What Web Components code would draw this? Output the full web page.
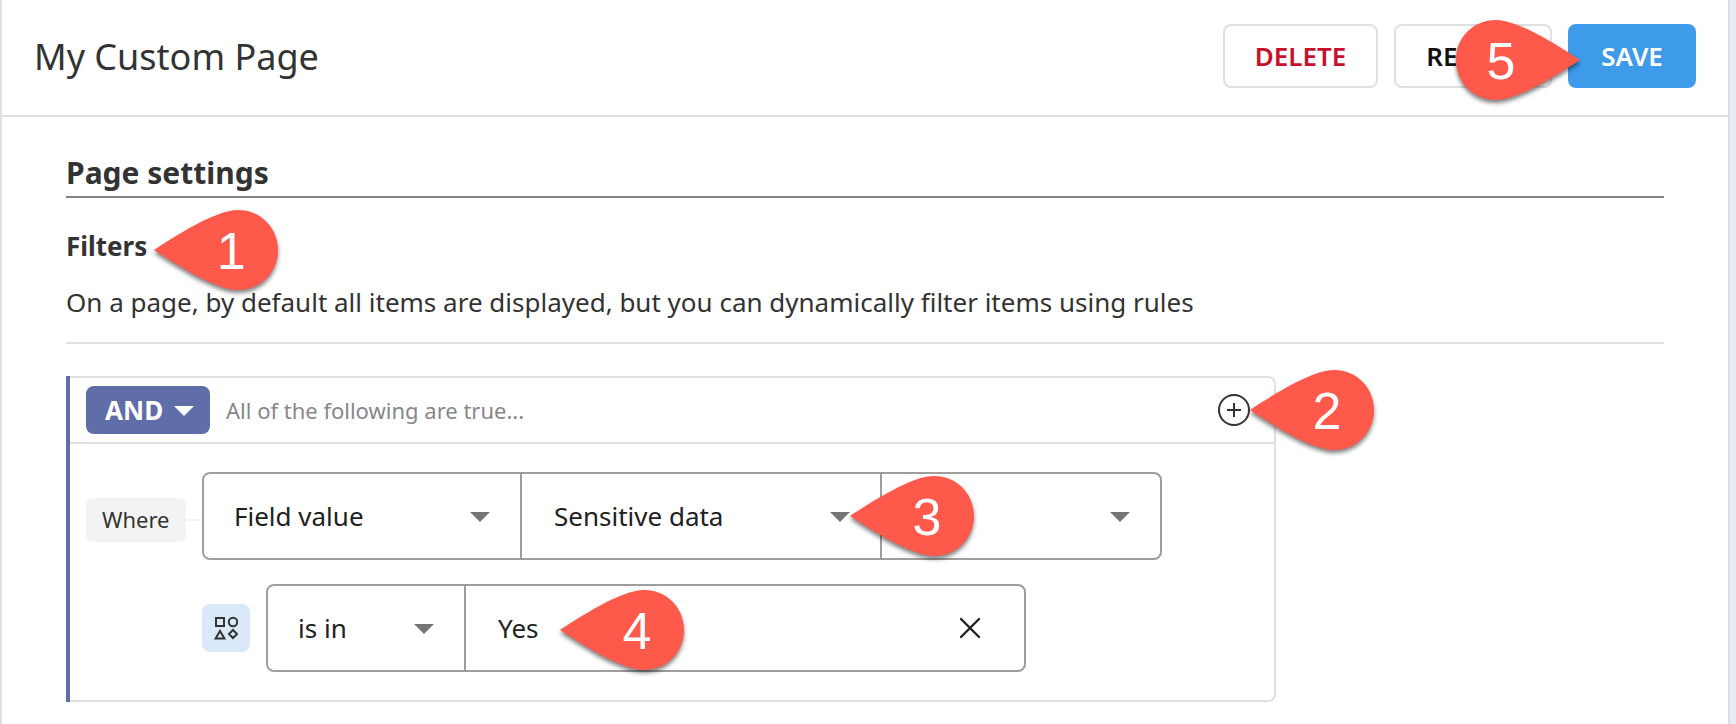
<!DOCTYPE html>
<html lang="en">
<head>
<meta charset="utf-8">
<title>My Custom Page</title>
<style>
  html { background: #e9edf3; }
  body { margin: 0; font-family: "Noto Sans", sans-serif; color: #333; }
</style>
</head>
<body>
<page-sheet>
  <page-header slot="header" heading="My Custom Page">
    <action-button kind="danger">DELETE</action-button>
    <action-button>REVERT</action-button>
    <action-button kind="primary">SAVE<step-pin slot="pin" direction="right" style="right: calc(100% - 12px); top: 36px">5</step-pin></action-button>
  </page-header>
  <settings-section heading="Page settings" subheading="Filters">
    <step-pin slot="pin" style="left: calc(100% + 7px); top: calc(50% + 4px)">1</step-pin>
    <span slot="description">On a page, by default all items are displayed, but you can dynamically filter items using rules</span>
    <filter-group>
      <step-pin slot="pin" style="left: 100%">2</step-pin>
      <filter-row>
        <where-tag slot="lead">Where</where-tag>
        <select-cell label="Source" value="Field value" style="--cell: 318px"></select-cell>
        <select-cell label="Field" value="Sensitive data" style="--cell: 360px"><step-pin slot="pin" style="left: calc(100% - 30px)">3</step-pin></select-cell>
        <select-cell label="Qualifier" value="" style="--cell: 280px"></select-cell>
      </filter-row>
      <filter-row nested>
        <type-icon slot="lead"></type-icon>
        <select-cell label="Operator" value="is in" style="--cell: 198px"></select-cell>
        <value-cell label="Value" value="Yes" style="--cell: 560px"><step-pin slot="pin" style="left: 94px; top: calc(50% + 2px)">4</step-pin></value-cell>
      </filter-row>
    </filter-group>
  </settings-section>
</page-sheet>

<script>
const define = (name, render) => customElements.define(name, class extends HTMLElement {
  connectedCallback() {
    if (this.shadowRoot) return;
    const root = this.attachShadow({ mode: "open" });
    root.innerHTML = "<style>*{box-sizing:border-box}</style>" + render(this);
  }
});
const attr = (el, name) => el.getAttribute(name) || "";

define("page-sheet", () => `
  <style>
    :host { display: flex; flex-direction: column; box-sizing: border-box; min-height: 100vh;
            margin-right: 6px; background: #fff; border-left: 2px solid #e0e0e0; border-right: 2px solid #d8dde3; }
    main { padding: 32px 64px 22px; }
  </style>
  <slot name="header"></slot>
  <main><slot></slot></main>`);

define("page-header", el => `
  <style>
    :host { display: flex; align-items: center; justify-content: space-between; box-sizing: border-box;
            padding: 24px 32px 27px; border-bottom: 2px solid #e0e0e0; }
    h1 { margin: 0; padding-top: 2px; font-size: 36px; line-height: 62px; font-weight: 400; }
    .actions { display: flex; gap: 16px; }
  </style>
  <h1>${attr(el, "heading")}</h1>
  <div class="actions"><slot></slot></div>`);

define("action-button", () => `
  <style>
    :host { display: block; position: relative; }
    button { display: block; min-width: 128px; height: 64px; padding: 0 30px; border: 2px solid #e0e0e0; border-radius: 8px;
             background: #fff; color: #111; font: 600 26px/32px "Noto Sans", sans-serif; }
    :host([kind=danger]) button { color: #c8102e; }
    :host([kind=primary]) button { background: #3d9be9; border-color: #3d9be9; color: #fff; }
  </style>
  <button type="button"><slot></slot></button>
  <slot name="pin"></slot>`);

define("settings-section", el => `
  <style>
    :host { display: block; }
    h2 { margin: 0; padding: 3px 0 2px; border-bottom: 2px solid #808080; font-size: 30px; line-height: 42px; font-weight: 700; }
    h3 { position: relative; width: fit-content; margin: 28px 0 0; font-size: 26px; line-height: 40px; font-weight: 700; }
    p { margin: 16px 0 0; padding-bottom: 20px; border-bottom: 2px solid #e0e0e0; font-size: 26px; line-height: 40px; }
    .body { margin-top: 32px; }
  </style>
  <h2>${attr(el, "heading")}</h2>
  <h3>${attr(el, "subheading")}<slot name="pin"></slot></h3>
  <p><slot name="description"></slot></p>
  <div class="body"><slot></slot></div>`);

define("filter-group", () => `
  <style>
    :host { display: block; box-sizing: border-box; max-width: 1210px; border: 2px solid #e0e0e0; border-width: 2px 2px 2px 0;
            border-radius: 0 8px 8px 0; }
    .group { margin: -2px 0; padding: 2px 0; border-left: 4px solid #5f6da8; }
    header { display: flex; align-items: center; gap: 16px; height: 66px; padding: 0 24px 0 16px; border-bottom: 2px solid #e0e0e0; }
    .join { position: relative; color: #fff; }
    select { appearance: none; display: block; width: 124px; height: 48px; padding: 0 16px 0 19px; border: 0; border-radius: 8px;
             background: #5f6da8; color: inherit; font: 700 26px/32px "Noto Sans", sans-serif; }
    .join svg { position: absolute; right: 16px; top: 20px; pointer-events: none; }
    .hint { flex: 1; color: #888; font-size: 22px; line-height: 32px; }
    .add { position: relative; }
    .add button { display: block; width: 32px; height: 32px; padding: 0; border: 0; background: none; }
    .add svg { display: block; }
    .rows { display: flex; flex-direction: column; gap: 24px; padding: 28px 16px; }
  </style>
  <div class="group">
    <header>
      <div class="join">
        <select aria-label="Join rules with"><option>AND</option><option>OR</option></select>
        <svg width="20" height="10" viewBox="0 0 20 10"><path d="M0 0h20L10 10z" fill="#fff"/></svg>
      </div>
      <span class="hint">All of the following are true...</span>
      <div class="add">
        <button type="button" aria-label="Add rule"><svg width="32" height="32" viewBox="0 0 32 32" fill="none" stroke="#333" stroke-width="2"><circle cx="16" cy="16" r="15"/><path d="M16 9v14M9 16h14"/></svg></button>
        <slot name="pin"></slot>
      </div>
    </header>
    <div class="rows"><slot></slot></div>
  </div>`);

define("filter-row", () => `
  <style>
    :host { display: flex; align-items: center; }
    :host([nested]) { padding-left: 116px; gap: 16px; }
    .cells { display: flex; min-width: 0; height: 88px; border: 2px solid #9e9e9e; border-radius: 8px; }
  </style>
  <slot name="lead"></slot>
  <div class="cells"><slot></slot></div>`);

define("where-tag", () => `
  <style>
    :host { display: flex; align-items: center; width: 116px; padding-top: 8px; box-sizing: border-box; }
    :host::after { content: ""; flex: 1; height: 2px; background: #f3f3f3; }
    span { padding: 5px 16px 7px; border-radius: 6px; background: #f3f3f3; font-size: 22px; line-height: 32px; }
  </style>
  <span><slot></slot></span>`);

define("type-icon", () => `
  <style>
    :host { display: grid; place-items: center; width: 48px; height: 48px; border-radius: 8px; background: #d9e9fa; }
    svg { display: block; }
  </style>
  <svg width="24" height="24" viewBox="0 0 24 24" fill="none" stroke="#333" stroke-width="2">
    <path d="M2 2h8v8H2zM6 15l-4.400 7.500h8.800zM19 14l4 4-4 4-4-4z"/><circle cx="19" cy="6" r="4.200"/>
  </svg>`);

const cellStyle = `
    :host { display: block; position: relative; flex: 0 1 auto; box-sizing: border-box; width: calc(var(--cell) - 2px); min-width: 0; }
    :host(:not(:last-child)) { border-right: 2px solid #9e9e9e; width: var(--cell); }
    select, input { appearance: none; display: block; width: 100%; height: 100%; margin: 0; padding: 0 52px 0 30px; border: 0; outline: 0;
             background: none; color: #212121; font: 400 26px/36px "Noto Sans", sans-serif; }`;

define("select-cell", el => `
  <style>${cellStyle}
    :host([label=Field]) select { padding-left: 32px; }
    svg { position: absolute; right: 30px; top: calc(50% - 4px); pointer-events: none; }
  </style>
  <select aria-label="${attr(el, "label")}"><option>${attr(el, "value")}</option></select>
  <svg width="20" height="10" viewBox="0 0 20 10"><path d="M0 0h20L10 10z" fill="#757575"/></svg>
  <slot name="pin"></slot>`);

define("value-cell", el => `
  <style>${cellStyle}
    :host { display: flex; align-items: center; }
    input { flex: 1; padding-left: 32px; padding-right: 16px; }
    button { flex: none; width: 20px; height: 20px; margin-right: 44px; padding: 0; border: 0; background: none; }
    svg { display: block; }
  </style>
  <input type="text" aria-label="${attr(el, "label")}" value="${attr(el, "value")}">
  <button type="button" aria-label="Clear value"><svg width="20" height="20" viewBox="0 0 20 20"><path d="M1 1l18 18M19 1L1 19" stroke="#212121" stroke-width="2.400" stroke-linecap="round"/></svg></button>
  <slot name="pin"></slot>`);

define("step-pin", () => `
  <style>
    :host { position: absolute; z-index: 2; top: 50%; width: 124px; height: 80px; margin-top: -40px; pointer-events: none;
            color: #fff; font: 400 52px/82px "Liberation Sans", sans-serif; text-align: center; }
    svg { position: absolute; inset: 0; overflow: visible; filter: drop-shadow(0 3px 2px rgba(0,0,0,.5)); }
    :host([direction=right]) svg { transform: scaleX(-1); }
    span { position: relative; display: block; padding-left: 30px; }
    :host([direction=right]) span { padding: 0 34px 0 0; }
  </style>
  <svg width="124" height="80" viewBox="0 0 124 80"><path d="M0 40C20 27 61 0 84 0C107 0 124 18 124 40S107 80 84 80C61 80 20 53 0 40z" fill="#ff594c"/></svg>
  <span><slot></slot></span>`);
</script>
</body>
</html>
